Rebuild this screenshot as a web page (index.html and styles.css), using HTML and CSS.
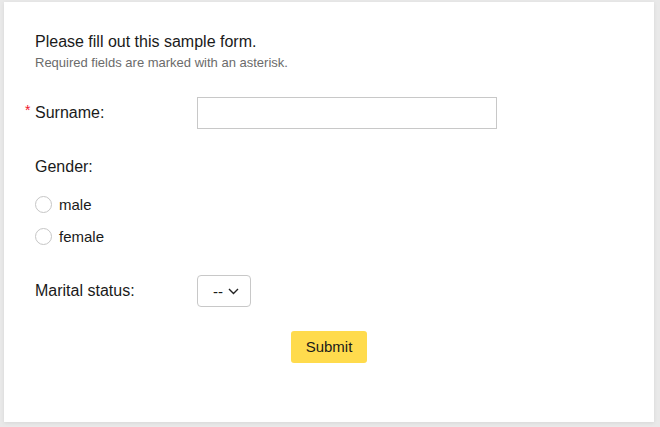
FILE: index.html
```html
<!DOCTYPE html>
<html>
<head>
<meta charset="utf-8">
<link rel="stylesheet" href="styles.css">
</head>
<body>
<form class="card">
  <div class="title">Please fill out this sample form.</div>
  <div class="subtitle">Required fields are marked with an asterisk.</div>

  <div class="row row-surname">
    <label class="label required" for="surname">Surname:</label>
    <input class="text-input" id="surname" type="text">
  </div>

  <div class="group-label">Gender:</div>
  <div class="radios">
    <label class="radio-row"><input type="radio" name="gender" class="radio"><span>male</span></label>
    <label class="radio-row"><input type="radio" name="gender" class="radio"><span>female</span></label>
  </div>

  <div class="row row-marital">
    <label class="label" for="marital">Marital status:</label>
    <div class="select-wrap">
      <select class="select" id="marital"><option>--</option></select>
      <svg class="chevron" width="11" height="7" viewBox="0 0 11 7"><path d="M1 1 L5.5 5.5 L10 1" fill="none" stroke="#222" stroke-width="1.4"/></svg>
    </div>
  </div>

  <div class="actions">
    <button type="button" class="submit">Submit</button>
  </div>
</form>
</body>
</html>
```
FILE: styles.css
```css
html, body {
  margin: 0;
  padding: 0;
}
body {
  background: #e9e9e9;
  font-family: "Liberation Sans", Arial, sans-serif;
  color: #1a1a1a;
  width: 660px;
  height: 427px;
  overflow: hidden;
}
.card {
  box-sizing: border-box;
  margin: 2px 0 0 4px;
  width: 650px;
  height: 420px;
  background: #fff;
  box-shadow: 0 1px 4px rgba(0, 0, 0, 0.08);
  padding: 31px 0 0 31px;
}
.title {
  font-size: 16px;
  line-height: 18px;
}
.subtitle {
  margin-top: 4px;
  font-size: 13px;
  line-height: 15px;
  color: #6b6b6b;
}
.row {
  display: flex;
  align-items: center;
}
.row-surname {
  margin-top: 27px;
}
.label {
  width: 162px;
  font-size: 16px;
  line-height: 18px;
  position: relative;
}
.required::before {
  content: "*";
  position: absolute;
  left: -10px;
  top: -3px;
  color: #f0142a;
  font-size: 14px;
}
.text-input {
  box-sizing: border-box;
  width: 300px;
  height: 32px;
  border: 1px solid #c8c8c8;
  border-radius: 0;
  margin: 0;
  padding: 0 8px;
  font: inherit;
  outline: none;
}
.group-label {
  margin-top: 29px;
  font-size: 16px;
  line-height: 18px;
}
.radios {
  margin-top: 12px;
}
.radio-row {
  display: flex;
  align-items: center;
  height: 32px;
  font-size: 15px;
}
.radio {
  appearance: none;
  -webkit-appearance: none;
  box-sizing: border-box;
  width: 17px;
  height: 17px;
  margin: 0 7px 0 0;
  border: 1px solid #c6c6c6;
  border-radius: 50%;
  background: #fff;
}
.row-marital {
  margin-top: 23px;
}
.select-wrap {
  position: relative;
  width: 54px;
  height: 32px;
}
.select {
  appearance: none;
  -webkit-appearance: none;
  box-sizing: border-box;
  width: 54px;
  height: 32px;
  margin: 0;
  border: 1px solid #c8c8c8;
  border-radius: 4px;
  background: #fff;
  padding: 0 0 0 15px;
  font-family: "Liberation Sans", Arial, sans-serif;
  font-size: 15px;
  color: #1a1a1a;
  outline: none;
}
.chevron {
  position: absolute;
  left: 31px;
  top: 13px;
  pointer-events: none;
}
.actions {
  display: flex;
  justify-content: center;
  margin-top: 24px;
  padding-right: 31px;
}
.submit {
  box-sizing: border-box;
  width: 76px;
  height: 32px;
  border: none;
  border-radius: 3px;
  background: #ffdb4d;
  font-family: "Liberation Sans", Arial, sans-serif;
  font-size: 15px;
  line-height: 31px;
  color: #1a1a1a;
  padding: 0 0 1px 0;
}
```
